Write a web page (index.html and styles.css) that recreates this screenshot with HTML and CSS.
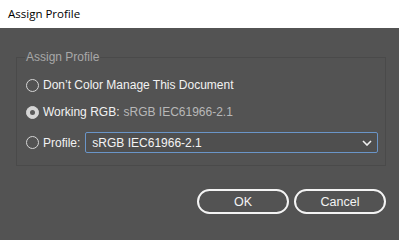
FILE: index.html
```html
<!DOCTYPE html>
<html>
<head>
<meta charset="utf-8">
<link rel="stylesheet" href="styles.css">
</head>
<body>
<div class="window">
  <div class="titlebar">Assign Profile</div>
  <div class="content">
    <fieldset class="group">
      <legend class="legend">Assign Profile</legend>
      <label class="row row-1">
        <span class="radio"></span>
        <span class="label">Don’t Color Manage This Document</span>
      </label>
      <label class="row row-2">
        <span class="radio checked"></span>
        <span class="label">Working RGB:</span>
        <span class="value">sRGB IEC61966-2.1</span>
      </label>
      <label class="row row-3">
        <span class="radio"></span>
        <span class="label">Profile:</span>
        <span class="select">
          <span class="select-text">sRGB IEC61966-2.1</span>
          <svg class="chevron" width="10" height="6" viewBox="0 0 10 6"><path d="M1 1 L5 5 L9 1" fill="none" stroke="#f0f0f0" stroke-width="1.6"/></svg>
        </span>
      </label>
    </fieldset>
    <div class="buttons">
      <button class="btn">OK</button>
      <button class="btn">Cancel</button>
    </div>
  </div>
</div>
</body>
</html>
```
FILE: styles.css
```css
html, body {
  margin: 0;
  padding: 0;
  background: #535353;
}
.window {
  width: 399px;
  height: 240px;
  display: flex;
  flex-direction: column;
  font-family: "Liberation Sans", Arial, sans-serif;
}
.titlebar {
  height: 28px;
  background: #ffffff;
  color: #000000;
  font-family: "Open Sans", "Noto Sans", sans-serif;
  font-size: 11.5px;
  line-height: 28px;
  padding-left: 8px;
  box-sizing: border-box;
}
.content {
  flex: 1;
  padding: 22px 13px 0 16px;
  display: flex;
  flex-direction: column;
}
.group {
  margin: 0;
  border: 1px solid #4a4a4a;
  padding: 11px 0 0 9px;
  height: 116px;
  box-sizing: border-box;
  display: flex;
  flex-direction: column;
}
.legend {
  color: #a8a8a8;
  font-size: 12px;
  padding: 0 1px;
  margin-left: -1px;
}
.row {
  display: flex;
  align-items: center;
  color: #f2f2f2;
  font-size: 12px;
  height: 20px;
}
.row-2 { margin-top: 7px; }
.row-3 { margin-top: 10px; height: 21px; }
.radio {
  width: 13px;
  height: 13px;
  box-sizing: border-box;
  border: 1.5px solid #d6d6d6;
  border-radius: 50%;
  margin-right: 4px;
  flex: none;
  display: flex;
  align-items: center;
  justify-content: center;
}
.radio.checked {
  background: #d6d6d6;
}
.radio.checked::after {
  content: "";
  width: 5px;
  height: 5px;
  border-radius: 50%;
  background: #5a5a5a;
}
.value {
  color: #b8b8b8;
  margin-left: 4px;
}
.select {
  margin-left: 5px;
  width: 293px;
  height: 21px;
  box-sizing: border-box;
  border: 1.5px solid #6a95c8;
  border-radius: 2px;
  background: #4f4f4f;
  display: flex;
  align-items: center;
  justify-content: space-between;
  padding: 0 5px 0 6px;
  color: #f4f4f4;
}
.buttons {
  display: flex;
  justify-content: flex-end;
  gap: 5px;
  margin-top: 23px;
}
.btn {
  width: 92px;
  height: 25px;
  box-sizing: border-box;
  border: 2px solid #f4f4f4;
  border-radius: 13px;
  background: transparent;
  color: #f4f4f4;
  font-family: "Liberation Sans", Arial, sans-serif;
  font-size: 12.5px;
  padding: 0;
}
```
